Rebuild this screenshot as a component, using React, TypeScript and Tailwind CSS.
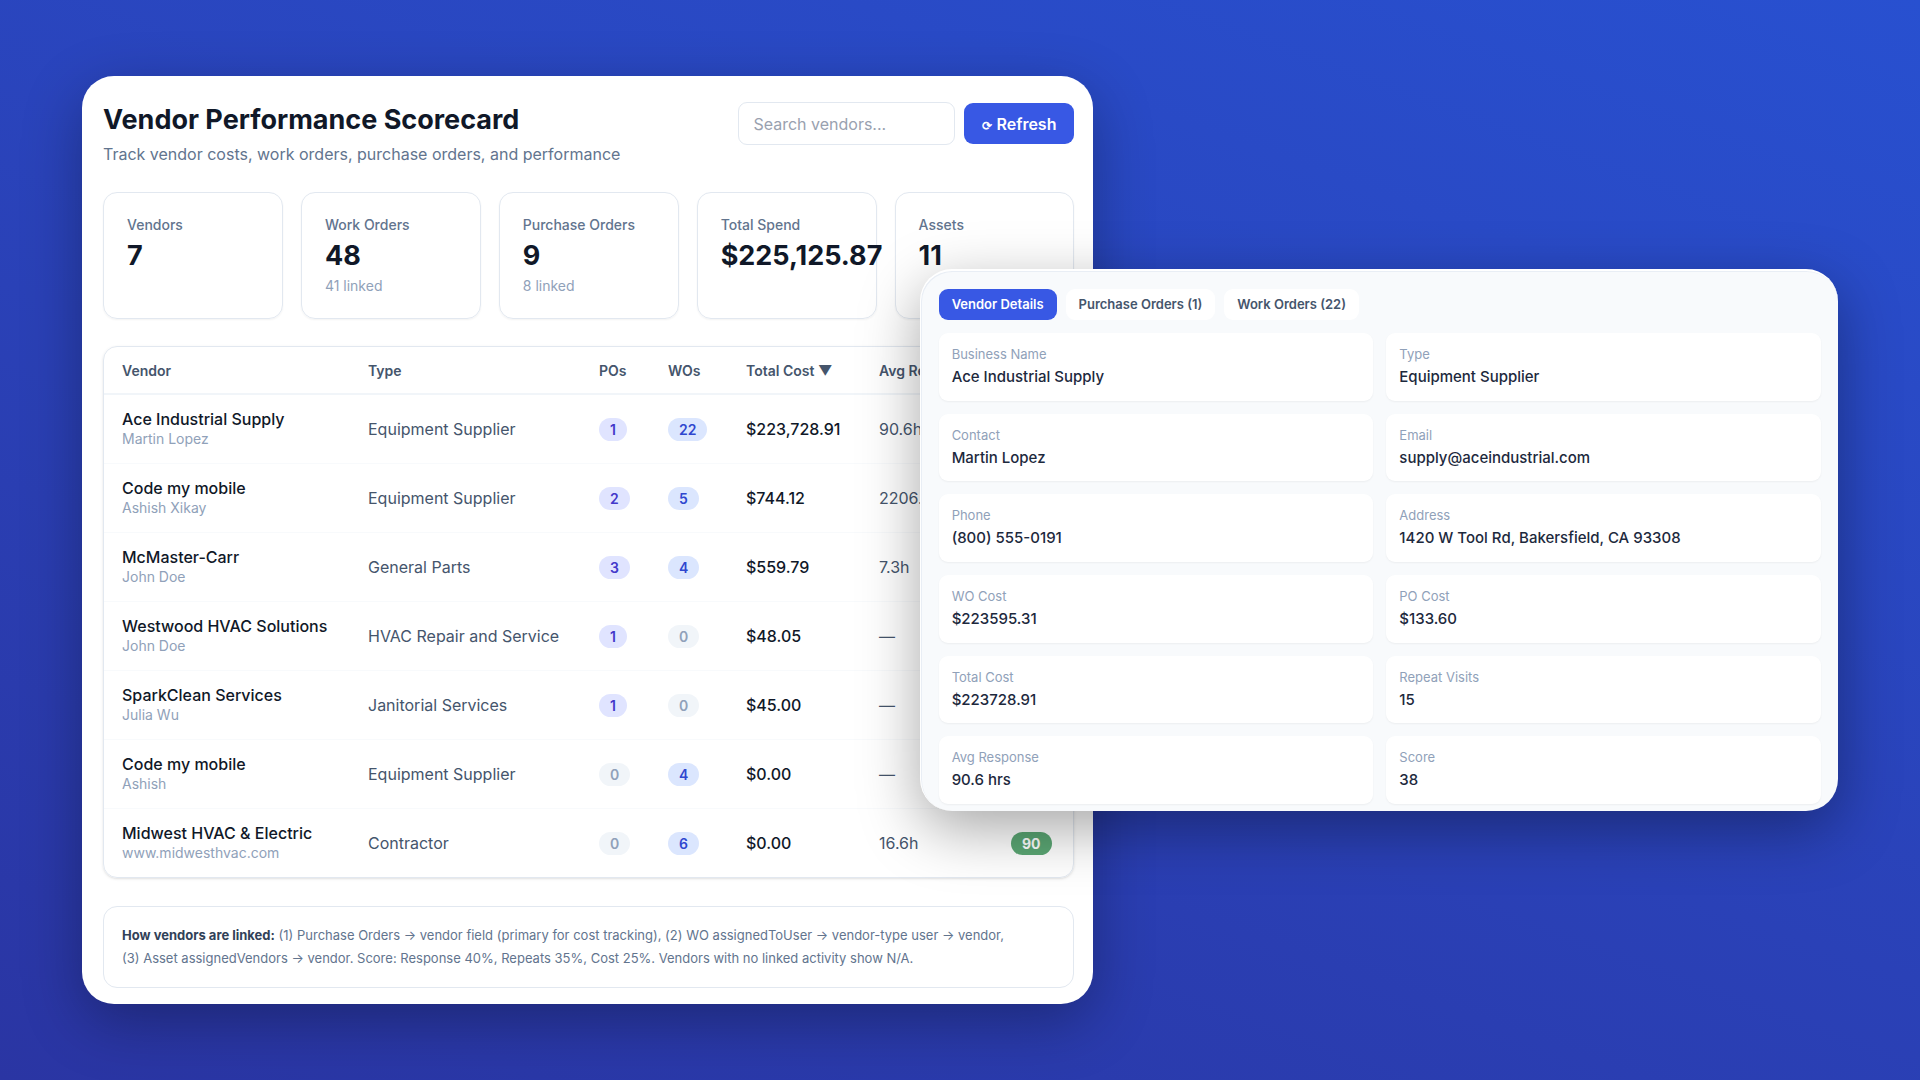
import clsx from 'clsx'

const stats = [
  { label: 'Vendors', value: '7' },
  { label: 'Work Orders', value: '48', note: '41 linked' },
  { label: 'Purchase Orders', value: '9', note: '8 linked' },
  { label: 'Total Spend', value: '$225,125.87' },
  { label: 'Assets', value: '11' },
]

const vendors = [
  { name: 'Ace Industrial Supply', contact: 'Martin Lopez', type: 'Equipment Supplier', pos: 1, wos: 22, cost: '$223,728.91', response: '90.6h' },
  { name: 'Code my mobile', contact: 'Ashish Xikay', type: 'Equipment Supplier', pos: 2, wos: 5, cost: '$744.12', response: '2206.' },
  { name: 'McMaster-Carr', contact: 'John Doe', type: 'General Parts', pos: 3, wos: 4, cost: '$559.79', response: '7.3h' },
  { name: 'Westwood HVAC Solutions', contact: 'John Doe', type: 'HVAC Repair and Service', pos: 1, wos: 0, cost: '$48.05', response: '—' },
  { name: 'SparkClean Services', contact: 'Julia Wu', type: 'Janitorial Services', pos: 1, wos: 0, cost: '$45.00', response: '—' },
  { name: 'Code my mobile', contact: 'Ashish', type: 'Equipment Supplier', pos: 0, wos: 4, cost: '$0.00', response: '—' },
  { name: 'Midwest HVAC & Electric', contact: 'www.midwesthvac.com', type: 'Contractor', pos: 0, wos: 6, cost: '$0.00', response: '16.6h', score: 90 },
]

const details = [
  ['Business Name', 'Ace Industrial Supply'],
  ['Type', 'Equipment Supplier'],
  ['Contact', 'Martin Lopez'],
  ['Email', 'supply@aceindustrial.com'],
  ['Phone', '(800) 555-0191'],
  ['Address', '1420 W Tool Rd, Bakersfield, CA 93308'],
  ['WO Cost', '$223595.31'],
  ['PO Cost', '$133.60'],
  ['Total Cost', '$223728.91'],
  ['Repeat Visits', '15'],
  ['Avg Response', '90.6 hrs'],
  ['Score', '38'],
]

const tabs = ['Vendor Details', 'Purchase Orders (1)', 'Work Orders (22)']

const Count = ({ value, className }: { value: number; className: string }) => (
  <span
    className={clsx(
      'inline-block rounded-full px-[11px] text-[14px] leading-[23px] font-semibold',
      value ? className : 'bg-slate-100 text-slate-400'
    )}
  >
    {value}
  </span>
)

const Header = () => (
  <header className="flex items-start justify-between">
    <div>
      <h1 className="text-[27px] leading-9 font-bold text-gray-900">
        Vendor Performance Scorecard
      </h1>
      <p className="mt-1 text-base text-slate-500">
        Track vendor costs, work orders, purchase orders, and performance
      </p>
    </div>
    <div className="flex items-center gap-[9px]">
      <input
        type="search"
        aria-label="Search vendors"
        placeholder="Search vendors..."
        className="h-[43px] w-[217px] rounded-[9px] border border-slate-200 bg-white px-[14px] text-base placeholder:text-gray-400"
      />
      <button className="h-[41px] rounded-[9px] bg-[#3858e4] px-[18px] text-base font-semibold text-white">
        <span className="text-xs">⟳</span> Refresh
      </button>
    </div>
  </header>
)

const Stats = () => (
  <section className="mt-[26px] grid grid-cols-5 gap-[18px]">
    {stats.map((stat) => (
      <div
        key={stat.label}
        className="min-h-[127px] min-w-0 rounded-[14px] border border-slate-200 px-[23px] py-[22px] shadow-xs"
      >
        <p className="text-[14px] leading-5 font-medium text-slate-500">{stat.label}</p>
        <p className="mt-[5px] text-[27px] leading-8 font-bold text-gray-900">{stat.value}</p>
        {stat.note && <p className="mt-1 text-[14px] leading-5 text-slate-400">{stat.note}</p>}
      </div>
    ))}
  </section>
)

const VendorTable = () => (
  <div className="mt-[27px] overflow-hidden rounded-[14px] border border-slate-200 shadow-sm">
    <table className="w-full table-fixed border-collapse text-left">
      <colgroup>
        <col className="w-[246px]" />
        <col className="w-[231px]" />
        <col className="w-[69px]" />
        <col className="w-[78px]" />
        <col className="w-[133px]" />
        <col className="w-[132px]" />
        <col className="w-[81px]" />
      </colgroup>
      <thead>
        <tr className="h-[47px] border-b-2 border-slate-100 text-[14px] text-slate-600">
          {['Vendor', 'Type', 'POs', 'WOs', 'Total Cost ▼', 'Avg Response', 'Score'].map((head) => (
            <th key={head} className="pl-[18px] font-semibold whitespace-nowrap">
              {head}
            </th>
          ))}
        </tr>
      </thead>
      <tbody>
        {vendors.map((vendor) => (
          <tr
            key={vendor.name + vendor.contact}
            className="h-[69px] border-b border-slate-50 text-base text-slate-600 last:border-0"
          >
            <td className="pl-[18px] whitespace-nowrap">
              <p className="leading-5 font-medium text-gray-900">{vendor.name}</p>
              <p className="text-[14px] leading-5 text-slate-400">{vendor.contact}</p>
            </td>
            <td className="pl-[18px] whitespace-nowrap">{vendor.type}</td>
            <td className="pl-[18px]">
              <Count value={vendor.pos} className="bg-[#e0e4ff] text-[#4338ca]" />
            </td>
            <td className="pl-[18px]">
              <Count value={vendor.wos} className="bg-[#dbe6fe] text-[#2f47cf]" />
            </td>
            <td className="pl-[18px] font-medium text-gray-900">{vendor.cost}</td>
            <td className="pl-[18px]">{vendor.response}</td>
            <td className="pl-[18px]">
              {vendor.score && (
                <span className="inline-block rounded-full bg-[#5ba774] px-[11px] text-[14px] leading-[23px] font-bold text-white">
                  {vendor.score}
                </span>
              )}
            </td>
          </tr>
        ))}
      </tbody>
    </table>
  </div>
)

const VendorPanel = () => (
  <aside className="absolute top-[193px] right-0 flex min-h-[542px] w-[52.3%] flex-col rounded-[32px] border-t-2 border-l border-white bg-slate-50 pt-[18px] pr-[17px] pb-[7px] pl-[18px] shadow-[inset_1px_1px_0_#e9eef5,0_18px_60px_rgba(0,0,0,0.35)]">
    <div className="flex gap-[9px]">
      {tabs.map((tab, i) => (
        <button
          key={tab}
          className={clsx(
            'h-[31px] rounded-[9px] px-[13px] text-[13px] font-semibold',
            i === 0 ? 'bg-[#3858e4] text-white' : 'bg-white text-slate-600'
          )}
        >
          {tab}
        </button>
      ))}
    </div>
    <dl className="mt-[13px] grid flex-1 auto-rows-fr grid-cols-2 gap-[13px]">
      {details.map(([label, value]) => (
        <div key={label} className="rounded-[9px] bg-white px-[13px] py-[11px] shadow-xs">
          <dt className="text-[13px] leading-5 text-slate-400">{label}</dt>
          <dd className="mt-px text-[15px] leading-6 font-medium text-slate-800">{value}</dd>
        </div>
      ))}
    </dl>
  </aside>
)

export default function App() {
  return (
    <div className="min-h-screen bg-linear-200 from-[#2850d0] to-[#2a35a3] px-[82px] py-[76px] font-['Inter',sans-serif]">
      <div className="relative">
        <main className="w-[57.6%] rounded-[32px] bg-white pt-[26px] pr-[19px] pb-4 pl-[21px] shadow-[0_18px_60px_rgba(0,0,0,0.3)]">
          <Header />
          <Stats />
          <VendorTable />
          <p className="mt-7 rounded-[14px] border border-slate-200 px-[18px] py-[17px] text-[13px] leading-[23px] text-slate-500">
            <strong className="font-bold text-slate-700">How vendors are linked:</strong> (1)
            Purchase Orders → vendor field (primary for cost tracking), (2) WO assignedToUser →
            vendor-type user → vendor,
            <br />
            (3) Asset assignedVendors → vendor. Score: Response 40%, Repeats 35%, Cost 25%. Vendors
            with no linked activity show N/A.
          </p>
        </main>
        <VendorPanel />
      </div>
    </div>
  )
}
